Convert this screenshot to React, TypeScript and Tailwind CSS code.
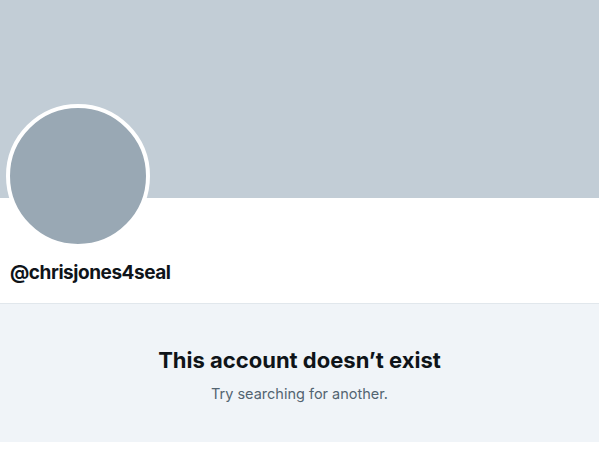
export default function App() {
  return (
    <div className="w-[599px] h-[453px] bg-white overflow-hidden" style={{ fontFamily: 'Inter, "Noto Sans", sans-serif' }}>
      <div className="h-[198px] bg-[#c2cdd6]" />
      <div className="px-[6px] -mt-[94px]">
        <div className="w-[144px] h-[144px] rounded-full bg-[#99a8b4] border-[4px] border-white" />
      </div>
      <div className="px-[10px] pt-[13px] h-[56px] border-b border-[#e1e7ec]">
        <div className="text-[19px] leading-[24px] font-bold text-[#0f1419] tracking-[-0.45px]">@chrisjones4seal</div>
      </div>
      <div className="h-[138px] bg-[#f0f4f8] flex flex-col items-center pt-[42px]">
        <div className="text-[22px] leading-[28px] font-bold text-[#0f1419] tracking-[0px]">This account doesn’t exist</div>
        <div className="mt-[10px] text-[14.5px] leading-[20px] text-[#536471]">Try searching for another.</div>
      </div>
    </div>
  );
}
